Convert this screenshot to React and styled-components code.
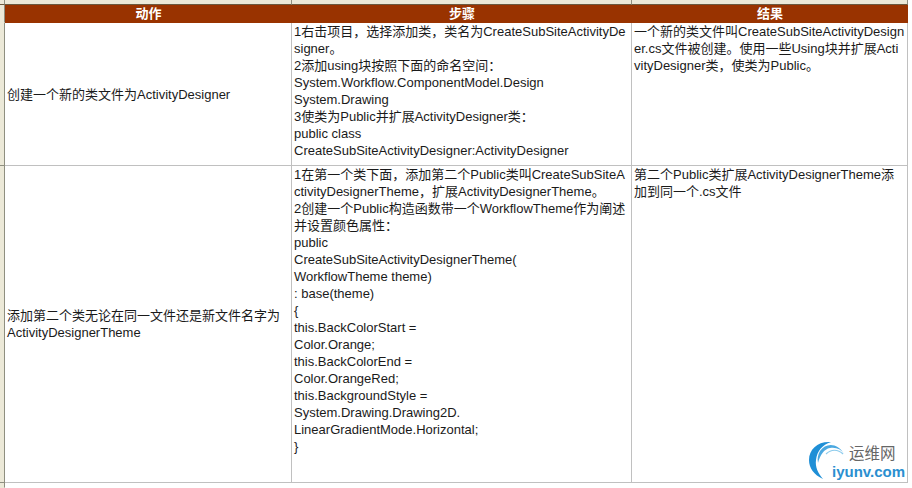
import styled, { createGlobalStyle } from "styled-components"

const Global = createGlobalStyle`
  html, body {
    margin: 0;
    padding: 0;
    background: #fff;
  }
`

const Page = styled.div`
  width: 912px;
  height: 488px;
  overflow: hidden;
  position: relative;
  display: grid;
  grid-template-columns: 5px 287px 340px 276px 4px;
  grid-template-rows: 5px 18px 143px 317px 5px;
  font-family: "Liberation Sans", "Noto Sans CJK SC", sans-serif;
  font-size: 13px;
  line-height: 17px;
  color: #1a1a1a;
`

const ColumnStrip = styled.div`
  background: #ece9d8;
  border-right: 1px solid #8f8f80;
  border-bottom: 1px solid #6b5a40;
`

const Gutter = styled.div`
  background: #ece9d8;
  border-right: 1px solid #8f8f80;
  border-bottom: 1px solid ${(p) => (p.$line ? "#8f8f80" : "transparent")};
`

const HeaderCell = styled.div`
  grid-column: 2 / span 3;
  background: #993300;
  color: #fff;
  display: grid;
  grid-template-columns: 287px 340px 276px;
  font-weight: bold;
  line-height: 18px;
  text-align: center;
`

const Cell = styled.div`
  border-right: 1px solid #c0c0c0;
  border-bottom: 1px solid #c0c0c0;
  padding: 0 2px;
  display: flex;
  align-items: ${(p) => (p.$center ? "center" : "flex-start")};
  overflow: hidden;
`

const Text = styled.div`
  word-break: break-all;
  white-space: pre-line;
`

const Blank = styled.div`
  grid-column: ${(p) => p.$span || "auto"};
`

const Logo = styled.div`
  position: absolute;
  left: 808px;
  top: 440px;
  width: 100px;
  height: 44px;
`

const LogoCn = styled.div`
  position: absolute;
  left: 41px;
  top: 6px;
  font-size: 15.5px;
  line-height: 16px;
  color: #666;
  white-space: nowrap;
`

const LogoEn = styled.div`
  position: absolute;
  left: 24px;
  top: 24px;
  font-size: 15px;
  line-height: 16px;
  font-weight: bold;
  color: #2a8fd0;
  white-space: nowrap;
`

export default function App() {
  return (
    <Page>
      <Global />
      <ColumnStrip />
      <ColumnStrip />
      <ColumnStrip />
      <ColumnStrip />
      <Blank />

      <Gutter />
      <HeaderCell>
        <span>动作</span>
        <span>步骤</span>
        <span>结果</span>
      </HeaderCell>
      <Blank />

      <Gutter $line />
      <Cell $center>
        <Text>创建一个新的类文件为ActivityDesigner</Text>
      </Cell>
      <Cell>
        <Text>{`1右击项目，选择添加类，类名为CreateSubSiteActivityDesigner。
2添加using块按照下面的命名空间：
System.Workflow.ComponentModel.Design
System.Drawing
3使类为Public并扩展ActivityDesigner类：
public class
CreateSubSiteActivityDesigner:ActivityDesigner`}</Text>
      </Cell>
      <Cell>
        <Text>{`一个新的类文件叫CreateSubSiteActivityDesigner.cs文件被创建。使用一些Using块并扩展Acti
vityDesigner类，使类为Public。`}</Text>
      </Cell>
      <Blank />

      <Gutter $line />
      <Cell $center>
        <Text>{`添加第二个类无论在同一文件还是新文件名字为
ActivityDesignerTheme`}</Text>
      </Cell>
      <Cell>
        <Text>{`1在第一个类下面，添加第二个Public类叫CreateSubSiteActivityDesignerTheme，扩展ActivityDesignerTheme。
2创建一个Public构造函数带一个WorkflowTheme作为阐述并设置颜色属性：
public
CreateSubSiteActivityDesignerTheme(
WorkflowTheme theme)
: base(theme)
{
this.BackColorStart =
Color.Orange;
this.BackColorEnd =
Color.OrangeRed;
this.BackgroundStyle =
System.Drawing.Drawing2D.
LinearGradientMode.Horizontal;
}`}</Text>
      </Cell>
      <Cell>
        <Text>第二个Public类扩展ActivityDesignerTheme添加到同一个.cs文件</Text>
      </Cell>
      <Blank />

      <Gutter />
      <Blank $span="2 / span 4" />

      <Logo>
        <svg width="40" height="44" viewBox="0 0 40 44" fill="none">
          <path d="M23 2 C10 1 1 9 1 20 C1 28 6 35 15 39 C10 33 7 27 8 20 C9 11 14 5 23 2 Z" fill="#1f8fd6" />
          <path d="M36 14 C30 3 18 2 12 11 C10 15 9 18 10 23 C12 15 16 9 22 8 C28 7 33 9 36 14 Z" fill="#4aa8e0" />
          <path d="M35 14 C30 9 23 9 18 14" stroke="#8ccbec" strokeWidth="1.2" />
        </svg>
        <LogoCn>运维网</LogoCn>
        <LogoEn>iyunv.com</LogoEn>
      </Logo>
    </Page>
  )
}
